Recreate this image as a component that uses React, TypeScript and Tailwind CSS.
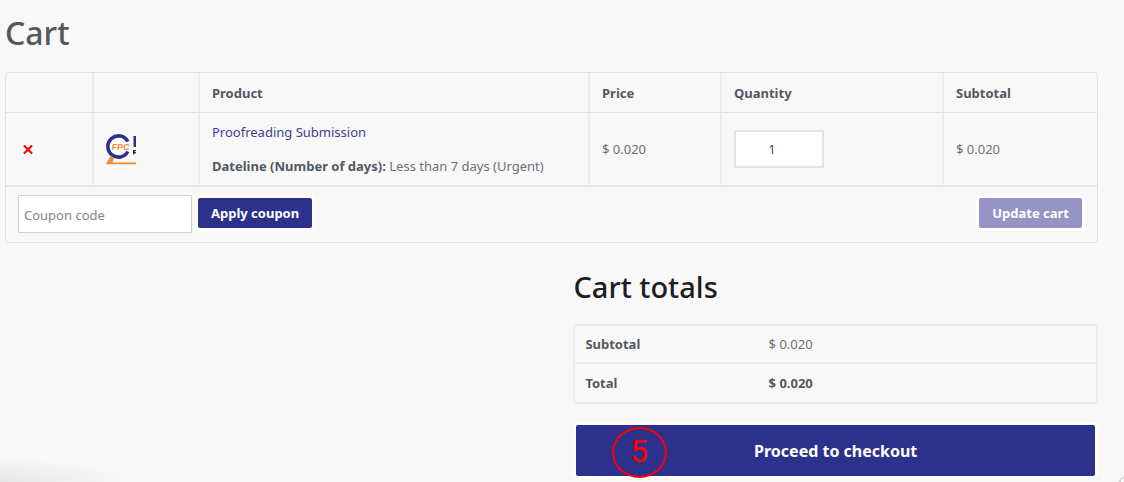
import { useState } from "react";

const head = "border-b border-[#e1e2e4] px-3 text-left font-bold text-[#515860]";
const divider = "border-l-2 border-l-[#ebecf0]";
const cell = "border-b-2 border-b-[#e5e6e8] px-3";
const smallButton =
  "h-[30px] rounded-[2px] px-[13px] text-[13px] font-bold text-white ring-3 ring-white";

function ProductThumb() {
  return (
    <svg width="30" height="32" viewBox="0 0 30 32" role="img" aria-label="FPC">
      <circle cx="12.5" cy="13.5" r="9" fill="#fff" />
      <path d="M21.8 8.5A10.6 10.6 0 1 0 21.8 18.5" fill="none" stroke="#2c318c" strokeWidth="3.6" />
      <text
        x="14.5"
        y="17"
        textAnchor="middle"
        fontFamily="Liberation Sans, sans-serif"
        fontSize="9"
        fontStyle="italic"
        fontWeight="bold"
        fill="#f5893b"
      >
        FPC
      </text>
      <path d="M27.5 3h2.5v11h-2.5z" fill="#2c318c" />
      <path d="M27 17h3v1.2h-1.6v.8H30v1.2h-1.6v1.3H27z" fill="#333" />
      <path d="M4.5 23l3.5 2-1.5 4.5H30v1.7H0z" fill="#f98a2b" />
    </svg>
  );
}

export default function App() {
  const [quantity, setQuantity] = useState("1");

  return (
    <div className="relative min-h-screen overflow-hidden bg-[#f8f8f8] pr-[26px] pl-[5px] font-['Noto_Sans','Open_Sans',sans-serif] text-[13px] leading-5 text-[#6a7178]">
      <main>
        <h1 className="pt-3 text-[32px] leading-[42px] font-medium text-[#515860]">Cart</h1>

        <form className="mt-[18px] rounded border border-[#e1e2e4]" onSubmit={(e) => e.preventDefault()}>
          <table className="w-full table-fixed border-separate border-spacing-0">
            <colgroup>
              <col className="w-[86px]" />
              <col className="w-[106px]" />
              <col />
              <col className="w-[132px]" />
              <col className="w-[222px]" />
              <col className="w-[155px]" />
            </colgroup>
            <thead>
              <tr className="h-10">
                <th className={head} aria-label="Remove" />
                <th className={`${head} ${divider}`} aria-label="Thumbnail" />
                <th className={`${head} ${divider}`}>Product</th>
                <th className={`${head} ${divider}`}>Price</th>
                <th className={`${head} ${divider}`}>Quantity</th>
                <th className={`${head} ${divider}`}>Subtotal</th>
              </tr>
            </thead>
            <tbody>
              <tr className="h-[74px]">
                <td className={cell}>
                  <button type="button" aria-label="Remove this item" className="flex size-5 items-center justify-center">
                    <svg width="10" height="10" viewBox="0 0 10 10" aria-hidden="true">
                      <path d="M1 1.5l8 8M9 1.5l-8 8" stroke="#f00" strokeWidth="2.1" />
                    </svg>
                  </button>
                </td>
                <td className={`${cell} ${divider}`}>
                  <ProductThumb />
                </td>
                <td className={`${cell} ${divider}`}>
                  <a href="#product" className="block text-[#3d4195]">
                    Proofreading Submission
                  </a>
                  <p className="mt-[14px]">
                    <b className="font-bold text-[#515860]">Dateline (Number of days):</b> Less than 7 days (Urgent)
                  </p>
                </td>
                <td className={`${cell} ${divider}`}>$ 0.020</td>
                <td className={`${cell} ${divider}`}>
                  <input
                    type="text"
                    inputMode="numeric"
                    aria-label="Quantity"
                    value={quantity}
                    onChange={(e) => setQuantity(e.target.value)}
                    className="block h-[38px] w-[90px] border-2 border-[#e0e3e8] bg-white pr-[14px] text-center text-[#43484d]"
                  />
                </td>
                <td className={`${cell} ${divider}`}>$ 0.020</td>
              </tr>
            </tbody>
          </table>
          <div className="flex items-start justify-between pt-2 pr-[15px] pb-[9px] pl-3">
            <div className="flex items-start gap-[6px]">
              <input
                type="text"
                aria-label="Coupon code"
                placeholder="Coupon code"
                className="h-[38px] w-[174px] border border-[#d3d1d3] bg-white px-[5px] pt-px placeholder:text-[#858585]"
              />
              <button type="submit" className={`${smallButton} mt-[3px] bg-[#2c318c]`}>
                Apply coupon
              </button>
            </div>
            <button type="button" disabled className={`${smallButton} mt-[3px] bg-[#9594c4]`}>
              Update cart
            </button>
          </div>
        </form>

        <section className="ml-auto w-[48%]">
          <h2 className="pt-6 text-[29px] leading-10 font-medium text-[#1b1e21]">Cart totals</h2>
          <div className="mt-[17px] rounded border-2 border-[#ebeced]">
            <table className="w-full table-fixed border-separate border-spacing-0 text-left">
              <colgroup>
                <col className="w-[35%]" />
                <col />
              </colgroup>
              <tbody>
                <tr className="h-[38px]">
                  <th className="border-b-2 border-[#ebedef] px-[10px] font-bold text-[#515860]">Subtotal</th>
                  <td className="border-b-2 border-[#ebedef] px-[11px]">$ 0.020</td>
                </tr>
                <tr className="h-[38px]">
                  <th className="px-[10px] font-bold text-[#515860]">Total</th>
                  <td className="px-[11px] font-bold text-[#515860]">$ 0.020</td>
                </tr>
              </tbody>
            </table>
          </div>
          <div className="relative mx-[3px] mt-[21px]">
            <a
              href="#checkout"
              className="flex h-[51px] items-center justify-center rounded-[2px] bg-[#2c318c] text-[16px] font-bold text-white ring-3 ring-white"
            >
              Proceed to checkout
            </a>
            <span className="absolute top-[2px] left-9 flex h-[51px] w-[55px] items-center justify-center rounded-[50%] border-2 border-[#f00] pr-[2px] pb-1 font-['Roboto',sans-serif] text-[32px] text-[#f00]">
              5
            </span>
          </div>
        </section>
      </main>
      <div
        aria-hidden="true"
        className="absolute bottom-0 left-0 h-6 w-[130px] bg-radial-[130px_24px_at_0%_100%] from-black/7 to-transparent"
      />
      <div
        aria-hidden="true"
        className="absolute -right-5 -bottom-5 size-6 rounded-md bg-white shadow-[0_0_3px_rgba(0,0,0,0.6)]"
      />
    </div>
  );
}
